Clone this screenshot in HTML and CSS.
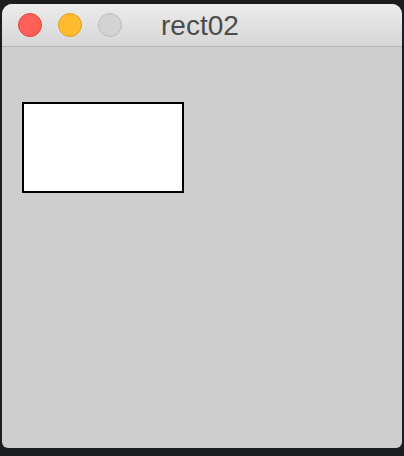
FILE: index.html
```html
<!DOCTYPE html>
<html>
<head>
<meta charset="utf-8">
<link rel="stylesheet" href="styles.css">
</head>
<body>
<div class="window">
  <div class="titlebar">
    <div class="lights">
      <span class="light red"></span>
      <span class="light yellow"></span>
      <span class="light gray"></span>
    </div>
    <div class="title">rect02</div>
  </div>
  <div class="content">
    <div class="rect"></div>
  </div>
</div>
</body>
</html>
```
FILE: styles.css
```css
html, body {
  margin: 0;
  padding: 0;
  background: #1c1d1f;
  width: 404px;
  height: 456px;
  overflow: hidden;
}
body {
  padding: 4px 2px 0 2px;
  box-sizing: border-box;
}
.window {
  width: 400px;
  height: 444px;
  border-radius: 10px 10px 6px 6px;
  overflow: hidden;
  background: #cecece;
  display: flex;
  flex-direction: column;
}
.titlebar {
  height: 42px;
  border-bottom: 1px solid #b3b3b3;
  background: linear-gradient(#ececec, #d7d7d7);
  display: flex;
  align-items: center;
  padding-left: 16px;
}
.lights {
  display: flex;
  gap: 16px;
}
.light {
  width: 24px;
  height: 24px;
  border-radius: 50%;
  box-sizing: border-box;
}
.red { background: #fe5f57; border: 1px solid #e2463f; }
.yellow { background: #febc2e; border: 1px solid #dea123; }
.gray { background: #d3d3d3; border: 1px solid #bdbdbd; }
.title {
  margin-left: 39px;
  font-family: "Liberation Sans", Arial, sans-serif;
  font-size: 28px;
  color: #4c4c4c;
  line-height: 1;
  margin-top: 1px;
}
.content {
  flex: 1;
  padding: 55px 0 0 20px;
}
.rect {
  width: 158px;
  height: 87px;
  background: #ffffff;
  border: 2px solid #000000;
}
```
